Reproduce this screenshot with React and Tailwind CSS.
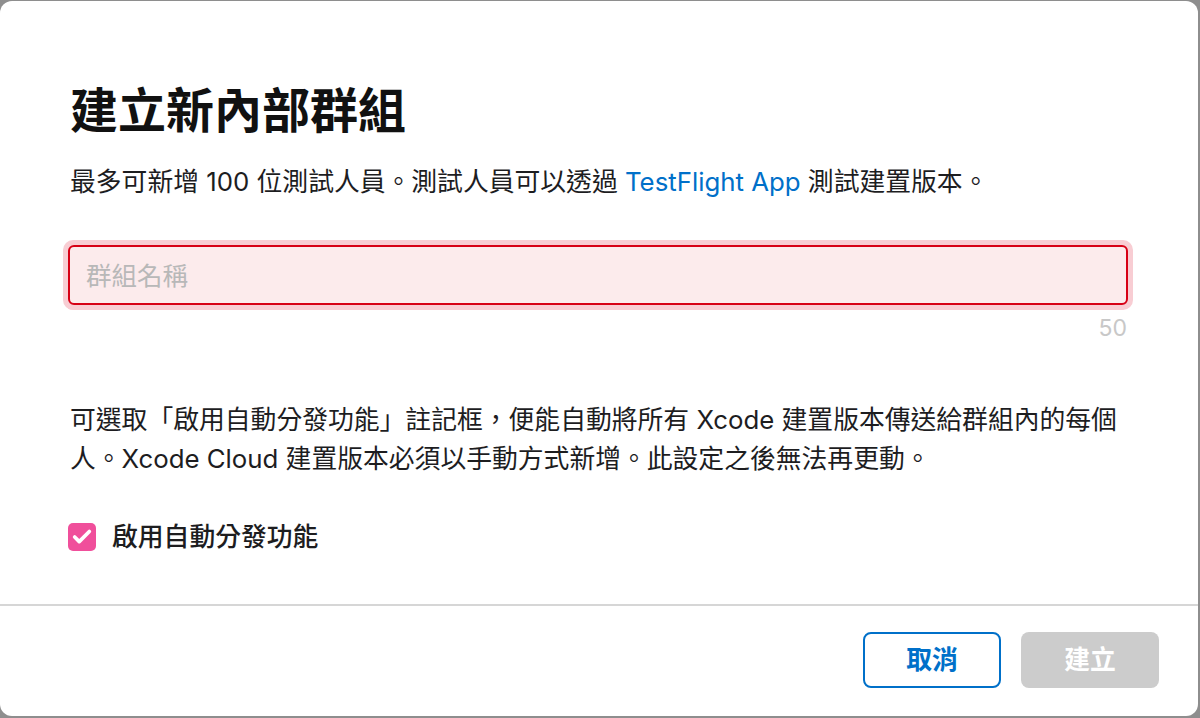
import { Check } from "lucide-react";

const font = {
  fontFamily: 'Inter, "Noto Sans CJK TC", sans-serif',
};

export default function App() {
  return (
    <div className="w-[1200px] h-[718px] bg-[#8e8e8e] overflow-hidden" style={font}>
      <div className="mt-[1px] w-[1198px] h-[715px] bg-white rounded-[12px] flex flex-col">
        {/* Body */}
        <div className="flex-1 px-[70px] pt-[78px]">
          <h1 className="text-[48px] leading-[64px] font-bold text-[#111111]">建立新內部群組</h1>
          <p className="mt-[21px] text-[25.8px] leading-[36px] text-[#1d1d1f]">
            最多可新增 100 位測試人員。測試人員可以透過{" "}
            <span className="text-[#0070c9]">TestFlight App</span> 測試建置版本。
          </p>

          <div className="mt-[40px] -ml-[7px] -mr-[5px] rounded-[10px] bg-[#f8cdd3] p-[5px]">
            <input
              type="text"
              placeholder="群組名稱"
              className="w-full h-[60px] rounded-[6px] border-2 border-[#d70015] bg-[#fcebec] px-[16px] text-[25.5px] outline-none placeholder:text-[#b8b8b8]"
            />
          </div>
          <div className="mt-[3px] text-right text-[23px] leading-[30px] text-[#c8c8c8] pr-[1px]">50</div>

          <p className="mt-[57px] text-[25.8px] leading-[39px] text-[#1d1d1f]">
            可選取「啟用自動分發功能」註記框，便能自動將所有 Xcode 建置版本傳送給群組內的每個人。Xcode Cloud 建置版本必須以手動方式新增。此設定之後無法再更動。
          </p>

          <label className="mt-[41px] flex items-center gap-[16px]">
            <span className="-ml-[2px] w-[28px] h-[28px] rounded-[5px] bg-[#f04f9b] flex items-center justify-center">
              <Check className="w-[22px] h-[22px] text-white" strokeWidth={4} />
            </span>
            <span className="text-[25.8px] leading-[36px] font-medium text-[#1d1d1f]">啟用自動分發功能</span>
          </label>
        </div>

        {/* Footer */}
        <div className="h-[112px] border-t-2 border-[#d6d6d6] flex items-center justify-end gap-[20px] pr-[39px] pb-[2px]">
          <button className="w-[138px] h-[56px] rounded-[8px] border-2 border-[#0070c9] text-[#0070c9] text-[25.8px] font-bold">
            取消
          </button>
          <button className="w-[138px] h-[56px] rounded-[8px] bg-[#cccccc] text-white text-[25.8px] font-bold">
            建立
          </button>
        </div>
      </div>
    </div>
  );
}
